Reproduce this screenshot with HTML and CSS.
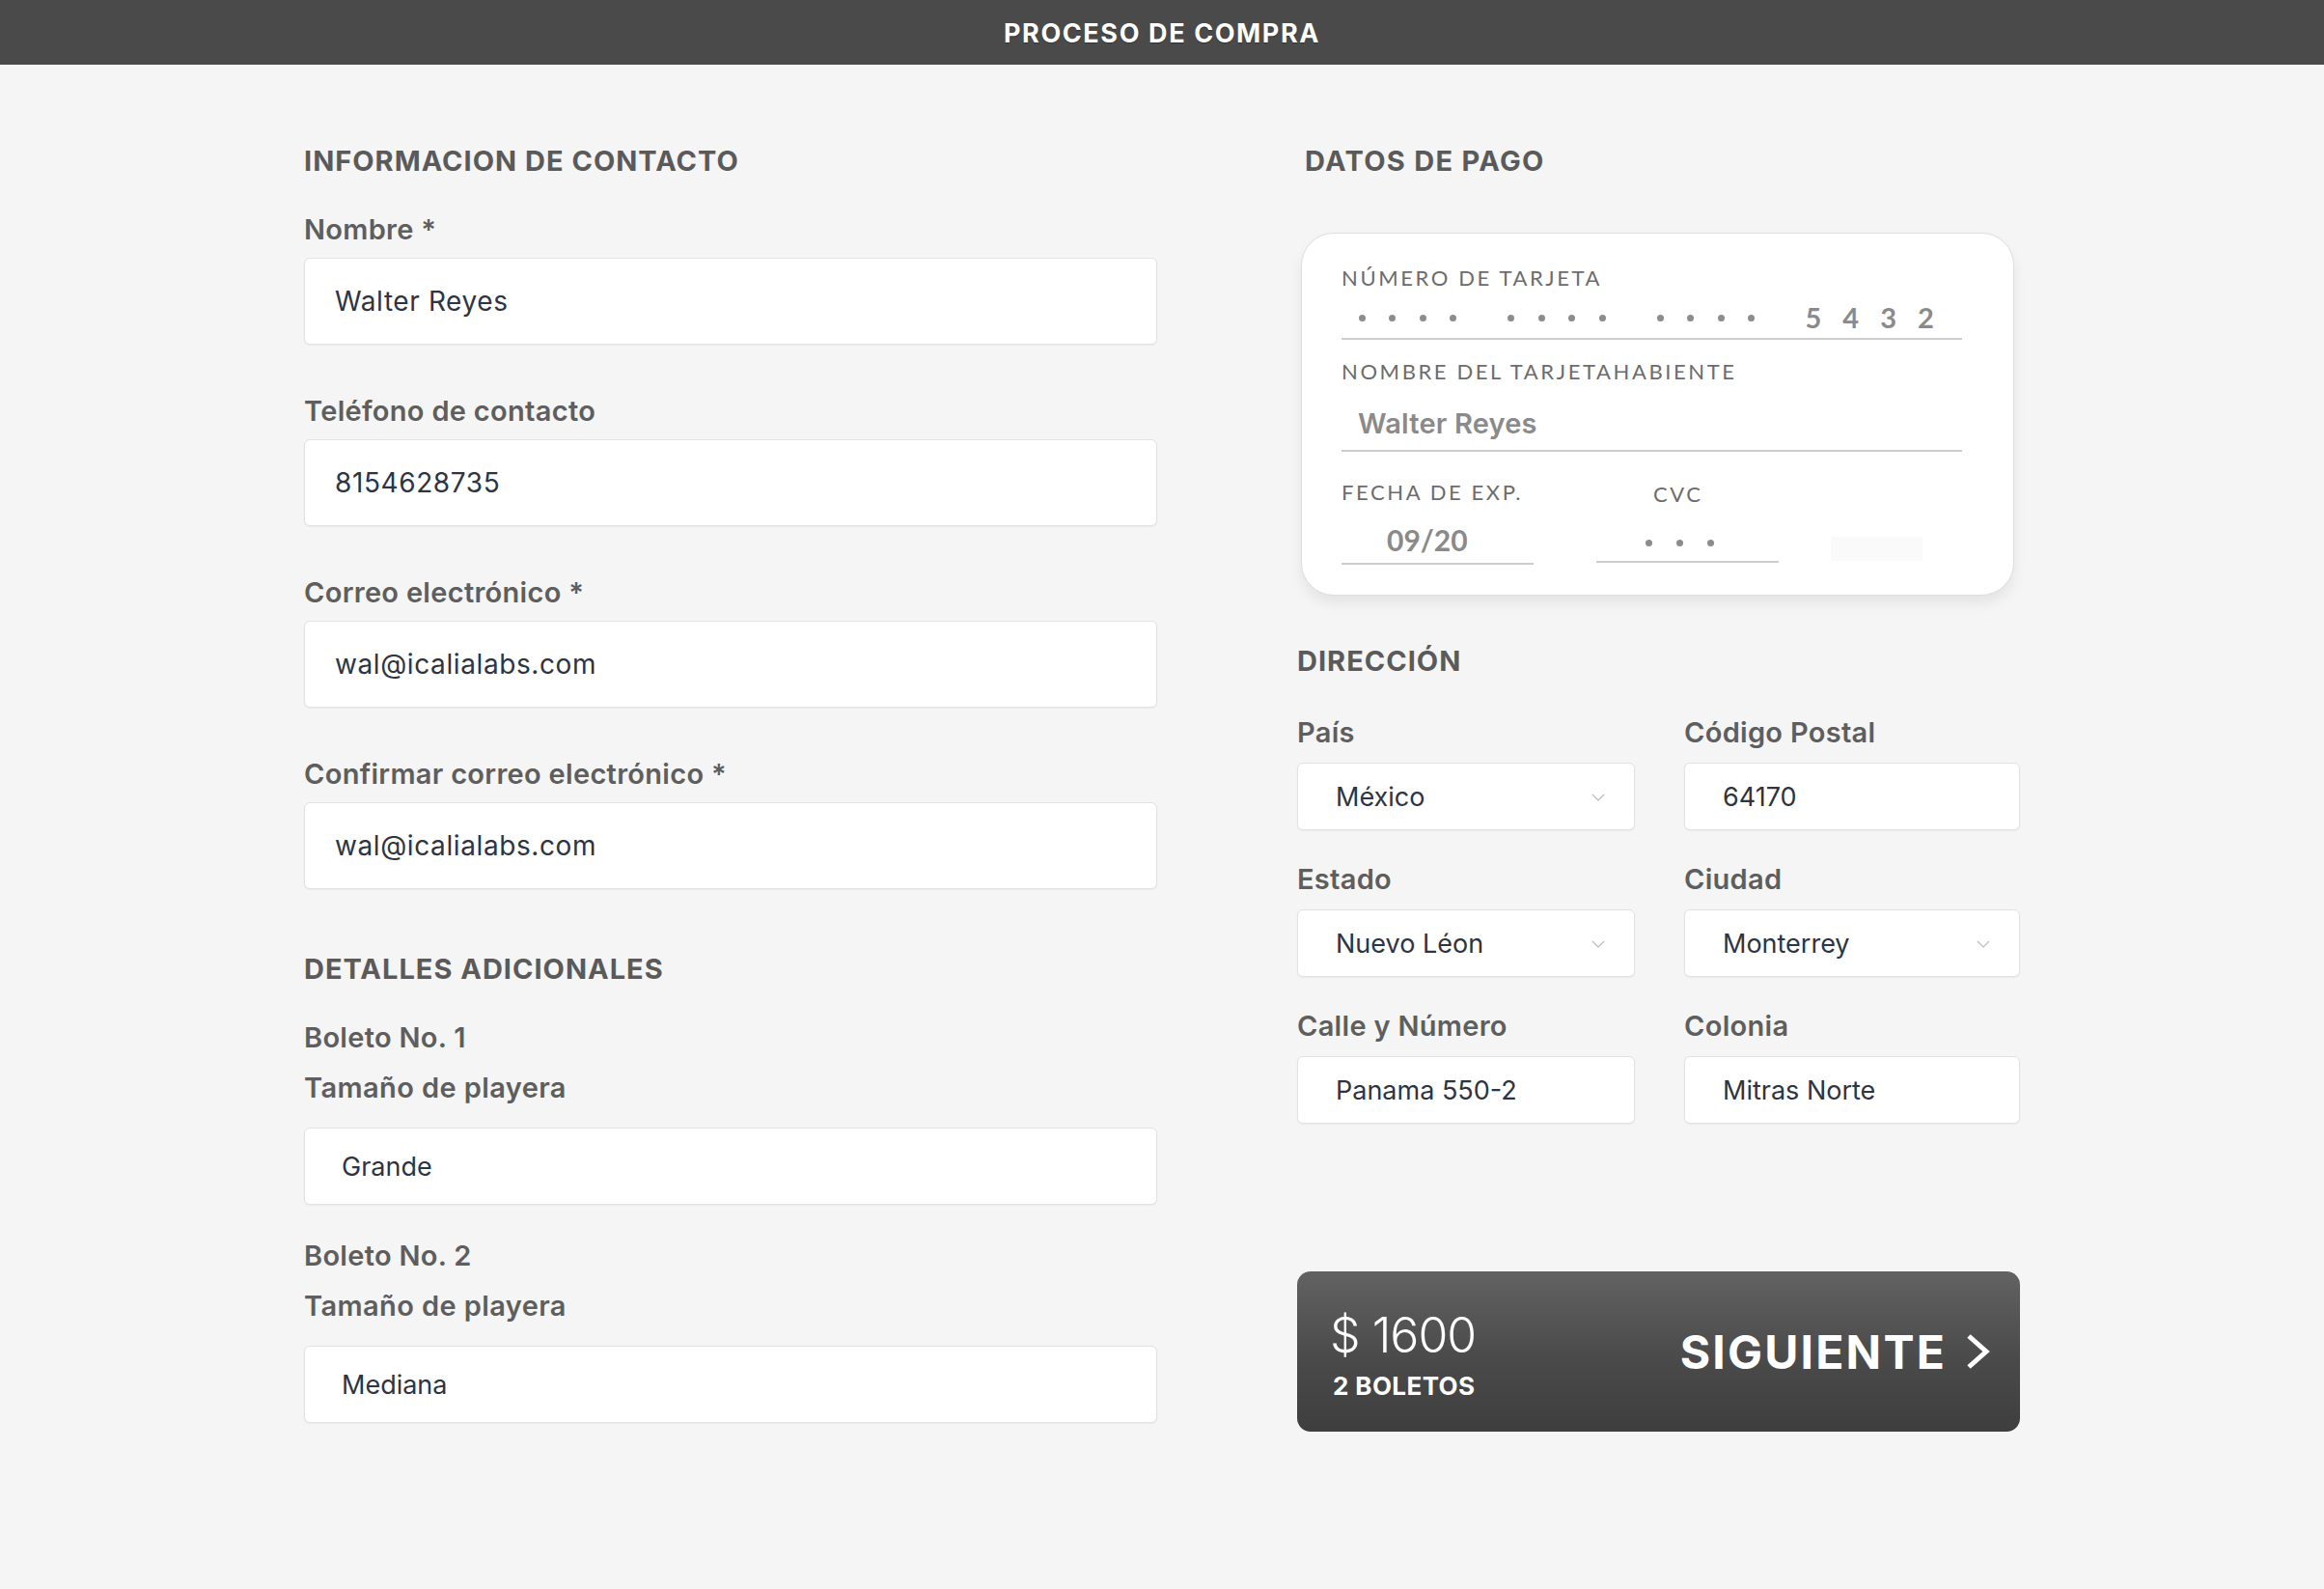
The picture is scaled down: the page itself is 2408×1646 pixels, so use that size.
FILE: index.html
```html
<!DOCTYPE html>
<html lang="es">
<head>
<meta charset="utf-8">
<title>Proceso de compra</title>
<link rel="stylesheet" href="styles.css">
</head>
<body>
<header class="topbar"><h1 class="topbar-title">PROCESO DE COMPRA</h1></header>
<main class="checkout">
  <section class="col-left">
    <h2 class="section-title">INFORMACION DE CONTACTO</h2>
    <div class="field">
      <div class="field-label">Nombre *</div>
      <div class="text-input">Walter Reyes</div>
    </div>
    <div class="field">
      <div class="field-label">Teléfono de contacto</div>
      <div class="text-input">8154628735</div>
    </div>
    <div class="field">
      <div class="field-label">Correo electrónico *</div>
      <div class="text-input">wal@icalialabs.com</div>
    </div>
    <div class="field">
      <div class="field-label">Confirmar correo electrónico *</div>
      <div class="text-input">wal@icalialabs.com</div>
    </div>

    <h2 class="section-title section-title--spaced">DETALLES ADICIONALES</h2>
    <div class="ticket">
      <div class="ticket-title">Boleto No. 1</div>
      <div class="ticket-label">Tamaño de playera</div>
      <div class="size-input">Grande</div>
    </div>
    <div class="ticket">
      <div class="ticket-title">Boleto No. 2</div>
      <div class="ticket-label">Tamaño de playera</div>
      <div class="size-input">Mediana</div>
    </div>
  </section>

  <section class="col-right">
    <h2 class="section-title section-title--pay">DATOS DE PAGO</h2>
    <div class="card">
      <div class="card-label">NÚMERO DE TARJETA</div>
      <div class="card-number">
        <span class="dot-group"><i class="dot"></i><i class="dot"></i><i class="dot"></i><i class="dot"></i></span>
        <span class="dot-group"><i class="dot"></i><i class="dot"></i><i class="dot"></i><i class="dot"></i></span>
        <span class="dot-group"><i class="dot"></i><i class="dot"></i><i class="dot"></i><i class="dot"></i></span>
        <span class="card-digits">5432</span>
      </div>
      <div class="card-label card-label--name">NOMBRE DEL TARJETAHABIENTE</div>
      <div class="card-name">Walter Reyes</div>
      <div class="card-bottom">
        <div class="card-exp">
          <div class="card-label">FECHA DE EXP.</div>
          <div class="card-exp-value">09/20</div>
        </div>
        <div class="card-cvc">
          <div class="card-label card-label--cvc">CVC</div>
          <div class="card-cvc-value"><i class="dot"></i><i class="dot"></i><i class="dot"></i></div>
        </div>
        <div class="card-ghost"></div>
      </div>
    </div>

    <h2 class="section-title section-title--addr">DIRECCIÓN</h2>
    <div class="addr-grid">
      <div class="addr-field">
        <div class="field-label field-label--addr">País</div>
        <div class="select-input"><span>México</span>
          <svg class="select-chevron" width="14" height="8" viewBox="0 0 14 8"><polyline points="1,1 7,7 13,1" fill="none" stroke="#c2c2c2" stroke-width="1.4"/></svg>
        </div>
      </div>
      <div class="addr-field">
        <div class="field-label field-label--addr">Código Postal</div>
        <div class="select-input">64170</div>
      </div>
      <div class="addr-field">
        <div class="field-label field-label--addr">Estado</div>
        <div class="select-input"><span>Nuevo Léon</span>
          <svg class="select-chevron" width="14" height="8" viewBox="0 0 14 8"><polyline points="1,1 7,7 13,1" fill="none" stroke="#c2c2c2" stroke-width="1.4"/></svg>
        </div>
      </div>
      <div class="addr-field">
        <div class="field-label field-label--addr">Ciudad</div>
        <div class="select-input"><span>Monterrey</span>
          <svg class="select-chevron" width="14" height="8" viewBox="0 0 14 8"><polyline points="1,1 7,7 13,1" fill="none" stroke="#c2c2c2" stroke-width="1.4"/></svg>
        </div>
      </div>
      <div class="addr-field">
        <div class="field-label field-label--addr">Calle y Número</div>
        <div class="select-input">Panama 550-2</div>
      </div>
      <div class="addr-field">
        <div class="field-label field-label--addr">Colonia</div>
        <div class="select-input">Mitras Norte</div>
      </div>
    </div>

    <button class="next-btn" type="button">
      <span class="next-total">
        <span class="next-price">$ 1600</span>
        <span class="next-count">2 BOLETOS</span>
      </span>
      <span class="next-action">SIGUIENTE
        <svg class="next-chevron" width="24" height="36" viewBox="0 0 24 36"><polyline points="2,2 20,18 2,34" fill="none" stroke="#ffffff" stroke-width="5"/></svg>
      </span>
    </button>
  </section>
</main>
</body>
</html>
```

FILE: styles.css
```css
* { box-sizing: border-box; }

html, body {
  margin: 0;
  padding: 0;
  background: #f5f5f5;
  font-family: Inter, "Noto Sans", sans-serif;
}

.topbar {
  height: 67px;
  background: #4a4a4a;
  display: flex;
  align-items: center;
  justify-content: center;
}

.topbar-title {
  margin: 0;
  font-family: Inter, "Noto Sans", sans-serif;
  font-weight: 700;
  font-size: 27px;
  letter-spacing: 1.6px;
  color: #ffffff;
  text-shadow: 0 1px 1px rgba(0,0,0,0.35);
  padding-top: 1px;
}

.checkout {
  width: 1778px;
  margin: 0 auto;
  padding-top: 82px;
  display: grid;
  grid-template-columns: 884px 749px;
  column-gap: 145px;
  align-items: start;
}

.section-title {
  margin: 0 0 35px;
  font-weight: 700;
  font-size: 29px;
  line-height: 36px;
  color: #5a5a5a;
  letter-spacing: 1px;
}

.section-title--spaced { margin-top: 65px; }

.field-label {
  font-weight: 600;
  font-size: 29px;
  line-height: 36px;
  color: #5e5e5e;
  margin-bottom: 11px;
  letter-spacing: 0.3px;
}

.text-input {
  height: 90px;
  background: #ffffff;
  border: 1.5px solid #e2e2e2;
  border-radius: 6px;
  box-shadow: 0 1px 2px rgba(0,0,0,0.05);
  padding-left: 31px;
  display: flex;
  align-items: center;
  font-size: 28px;
  letter-spacing: 0.6px;
  color: #2e3441;
  margin-bottom: 51px;
}

.ticket-title {
  font-weight: 600;
  font-size: 29px;
  line-height: 36px;
  color: #5e5e5e;
  margin-bottom: 16px;
  letter-spacing: 0.3px;
}

.ticket-label {
  font-weight: 600;
  font-size: 29px;
  line-height: 36px;
  color: #5e5e5e;
  margin-bottom: 23px;
  letter-spacing: 0.4px;
}

.size-input {
  height: 80px;
  background: #ffffff;
  border: 1.5px solid #e2e2e2;
  border-radius: 6px;
  box-shadow: 0 1px 2px rgba(0,0,0,0.05);
  padding-left: 38px;
  display: flex;
  align-items: center;
  font-size: 27px;
  color: #2e3441;
  margin-bottom: 35px;
}

/* right column */
.section-title--pay { padding-left: 8px; margin-bottom: 56px; letter-spacing: 1.3px; }

.card {
  margin: 0 6px 0 4px;
  background: #ffffff;
  border: 1px solid #dedede;
  border-radius: 34px;
  box-shadow: 0 8px 14px rgba(0,0,0,0.07);
  padding: 33px 53px 31px 41px;
  font-family: Lato, "Noto Sans", sans-serif;
}

.card-label {
  font-weight: 400;
  font-size: 22px;
  line-height: 26px;
  letter-spacing: 2.6px;
  color: #6c6c6c;
  white-space: nowrap;
}

.card-number {
  display: flex;
  align-items: center;
  height: 51px;
  padding-top: 5px;
  padding-left: 17.5px;
  border-bottom: 2px solid #cdcdcd;
}

.dot-group {
  display: flex;
  gap: 24.5px;
  margin-right: 53px;
  margin-top: 3px;
}

.dot {
  display: block;
  width: 7px;
  height: 7px;
  border-radius: 50%;
  background: #8c8c8c;
}

.card-digits {
  font-weight: 700;
  font-size: 29px;
  line-height: 29px;
  letter-spacing: 22px;
  color: #8a8a8a;
  margin-left: -0.5px;
}

.card-label--name { margin-top: 20px; }

.card-name {
  font-family: Inter, "Noto Sans", sans-serif;
  font-weight: 600;
  font-size: 29px;
  line-height: 30px;
  color: #8a8a8a;
  letter-spacing: 0.2px;
  padding: 26px 0 12px 17px;
  border-bottom: 2px solid #cdcdcd;
}

.card-bottom {
  display: flex;
  margin-top: 29px;
  align-items: flex-end;
}

.card-exp { width: 199px; }

.card-exp-value {
  font-weight: 700;
  font-size: 30px;
  line-height: 30px;
  color: #8a8a8a;
  padding: 21px 0 9px 47px;
  border-bottom: 2px solid #cdcdcd;
}

.card-cvc {
  width: 189px;
  margin-left: 65px;
  margin-bottom: 2px;
}

.card-label--cvc { padding-left: 59px; }

.card-cvc-value {
  height: 58px;
  display: flex;
  align-items: flex-end;
  gap: 25px;
  padding: 0 0 15px 50.5px;
  border-bottom: 2px solid #cdcdcd;
}

.card-ghost {
  width: 95px;
  height: 25px;
  margin-left: 54px;
  margin-bottom: 4px;
  background: #fafafa;
}

.section-title--addr { margin-top: 50px; margin-bottom: 38px; }

.addr-grid {
  display: grid;
  grid-template-columns: 350px 348px;
  column-gap: 51px;
  row-gap: 33px;
}

.field-label--addr { margin-bottom: 13px; }

.select-input {
  height: 70px;
  background: #ffffff;
  border: 1.5px solid #e2e2e2;
  border-radius: 6px;
  box-shadow: 0 1px 2px rgba(0,0,0,0.05);
  padding: 0 30px 0 39px;
  display: flex;
  align-items: center;
  justify-content: space-between;
  font-size: 27px;
  color: #2e3441;
}

.select-chevron { flex: none; margin-top: 2px; }

.next-btn {
  margin-top: 153px;
  width: 749px;
  height: 166px;
  border: none;
  border-radius: 14px;
  background: linear-gradient(180deg, #626262 0%, #4a4a4a 55%, #3e3e3e 100%);
  display: flex;
  align-items: center;
  justify-content: space-between;
  padding: 0 31px 0 34px;
  color: #ffffff;
  font-family: Inter, "Noto Sans", sans-serif;
  cursor: pointer;
}

.next-total {
  display: flex;
  flex-direction: column;
  align-items: flex-start;
  margin-top: 6px;
}

.next-price {
  font-weight: 300;
  font-size: 50px;
  line-height: 56px;
  letter-spacing: -1px;
}

.next-count {
  font-weight: 700;
  font-size: 26px;
  line-height: 30px;
  letter-spacing: 0.4px;
  margin-top: 10px;
  padding-left: 3px;
}

.next-action {
  display: flex;
  align-items: center;
  gap: 21px;
  font-weight: 700;
  font-size: 48px;
  letter-spacing: 2.2px;
}

.next-chevron { flex: none; }
```
